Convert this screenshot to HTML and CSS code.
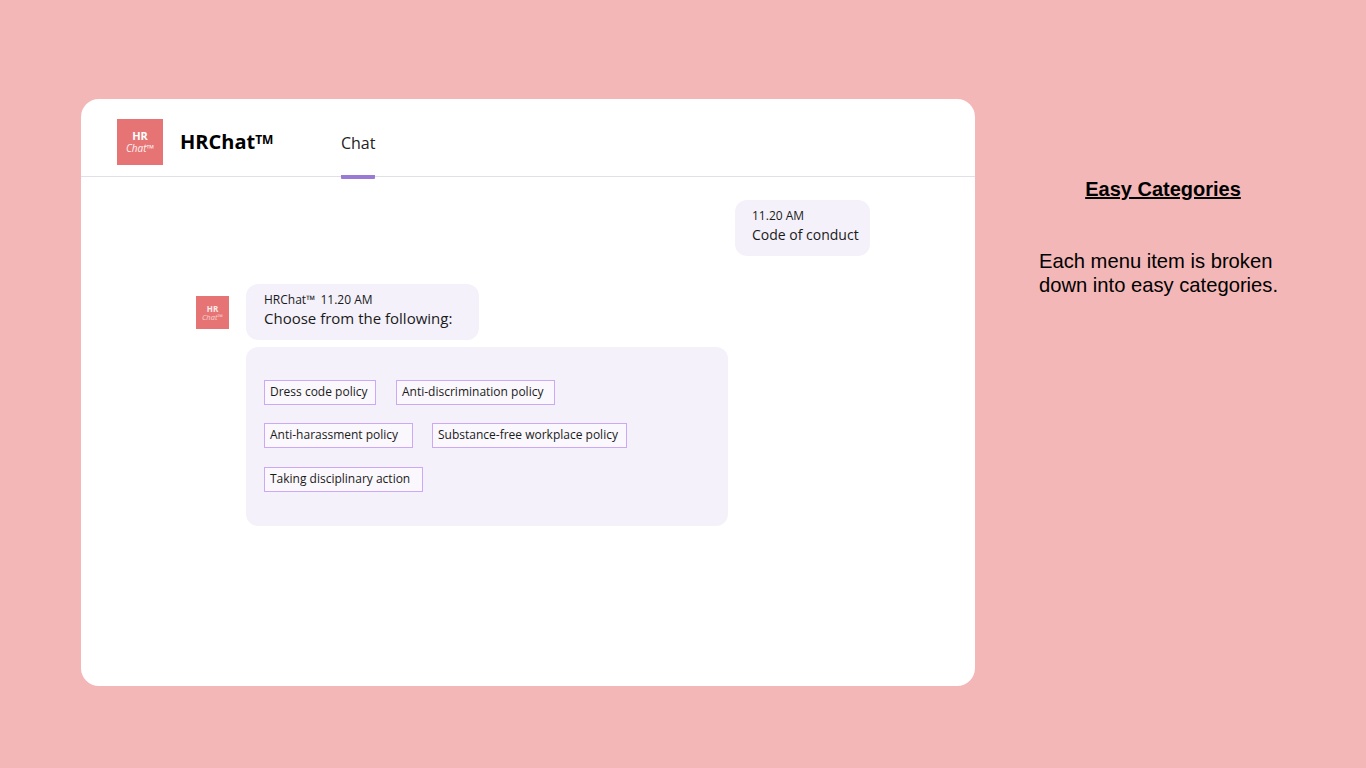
FILE: index.html
```html
<!DOCTYPE html>
<html lang="en">
<head>
    <meta charset="UTF-8">
    <meta name="viewport" content="width=device-width, initial-scale=1.0">
    <title>HRChat</title>
    <link rel="stylesheet" href="styles.css">
</head>
<body>
    <div class="chat-card">
        <header class="chat-header">
            <div class="logo">
                <span class="logo-hr">HR</span>
                <span class="logo-chat">Chat™</span>
            </div>
            <div class="brand">HRChat<span class="brand-tm">TM</span></div>
            <nav class="tabs">
                <a class="tab">Chat</a>
            </nav>
        </header>
        <div class="messages">
            <div class="bubble user-bubble">
                <div class="msg-meta">11.20 AM</div>
                <div class="msg-text">Code of conduct</div>
            </div>
            <div class="bot-row">
                <div class="logo logo-small">
                    <span class="logo-hr">HR</span>
                    <span class="logo-chat">Chat™</span>
                </div>
                <div class="bot-content">
                    <div class="bubble bot-bubble">
                        <div class="msg-meta">HRChat<span class="meta-tm">™</span> 11.20 AM</div>
                        <div class="msg-text msg-text-large">Choose from the following:</div>
                    </div>
                    <div class="options">
                        <div class="options-row">
                            <button class="option option-1">Dress code policy</button>
                            <button class="option option-2">Anti-discrimination policy</button>
                        </div>
                        <div class="options-row options-row-tight">
                            <button class="option option-3">Anti-harassment policy</button>
                            <button class="option option-4">Substance-free workplace policy</button>
                        </div>
                        <div class="options-row options-row-last">
                            <button class="option option-5">Taking disciplinary action</button>
                        </div>
                    </div>
                </div>
            </div>
        </div>
    </div>
    <aside class="notes">
        <h2 class="notes-title">Easy Categories</h2>
        <p class="notes-text">Each menu item is broken down into easy categories.</p>
    </aside>
</body>
</html>
```

FILE: styles.css
```css
body {
    font-family: "Open Sans", sans-serif;
    display: flex;
    align-items: flex-start;
    height: 768px;
    margin: 0;
    overflow: hidden;
    background-color: #f3b7b7;
    color: #111;
}

.chat-card {
    width: 894px;
    height: 587px;
    margin: 99px 0 0 81px;
    background: white;
    border-radius: 18px;
}

.chat-header {
    display: flex;
    align-items: flex-start;
    height: 77px;
    padding-left: 36px;
    border-bottom: 1px solid #e2e0e4;
}

.logo {
    display: flex;
    flex-direction: column;
    align-items: center;
    justify-content: center;
    flex-shrink: 0;
    width: 46px;
    height: 46px;
    margin-top: 20px;
    background-color: #e77474;
    color: white;
}

.logo-hr {
    font-size: 11px;
    font-weight: 700;
    line-height: 12px;
    margin-top: 1px;
}

.logo-chat {
    font-size: 10px;
    font-style: italic;
    line-height: 13px;
    opacity: 0.9;
}

.logo-small {
    width: 33px;
    height: 33px;
    margin: 12px 17px 0 0;
}

.logo-small .logo-hr {
    font-size: 8px;
    line-height: 9px;
    opacity: 0.85;
}

.logo-small .logo-chat {
    font-size: 7.5px;
    line-height: 9px;
    opacity: 0.65;
}

.brand {
    margin: 28px 0 0 17px;
    font-size: 20px;
    font-weight: 700;
    line-height: 30px;
    color: #000;
}

.brand-tm {
    position: relative;
    top: -5px;
    font-size: 12px;
}

.tabs {
    margin-left: 67.5px;
}

.tab {
    display: block;
    height: 80px;
    padding-top: 33px;
    box-sizing: border-box;
    border-bottom: 4px solid #9b7ad6;
    border-radius: 0 0 1px 1px;
    font-size: 16px;
    line-height: 22px;
    color: #222;
}

.messages {
    padding: 23px 105px 0 115px;
}

.bubble {
    background-color: #f4f1fb;
    border-radius: 12px;
    box-sizing: border-box;
    height: 56px;
}

.user-bubble {
    width: 135px;
    margin-left: auto;
    padding: 7px 0 0 17px;
}

.bot-bubble {
    width: 233px;
    padding: 7px 0 0 18px;
}

.msg-meta {
    font-size: 12px;
    line-height: 17px;
    color: #1a1a1a;
}

.meta-tm {
    letter-spacing: 2px;
}

.msg-text {
    font-size: 14px;
    line-height: 22px;
    color: #1a1a1a;
}

.msg-text-large {
    margin-top: -1px;
    font-size: 15px;
}

.bot-row {
    display: flex;
    align-items: flex-start;
    margin-top: 28px;
}

.bot-content {
    width: 482px;
}

.options {
    display: flex;
    flex-direction: column;
    gap: 18px;
    box-sizing: border-box;
    height: 179px;
    margin-top: 7px;
    padding: 33px 18px 0;
    background-color: #f4f1fb;
    border-radius: 12px;
}

.options-row {
    display: flex;
    gap: 20px;
}

.options-row-tight {
    gap: 19px;
}

.options-row-last {
    margin-top: 1px;
}

.option {
    height: 25px;
    padding: 0 0 2px 5px;
    box-sizing: border-box;
    border: 1px solid #cba9f6;
    background-color: #faf8fd;
    font-family: "Open Sans", sans-serif;
    font-size: 12px;
    text-align: left;
    color: #1a1a1a;
}

.option-1 { width: 112px; }
.option-2 { width: 159px; }
.option-3 { width: 149px; }
.option-4 { width: 195px; }
.option-5 { width: 159px; }

.notes {
    width: 260px;
    margin-left: 64px;
    font-family: "Liberation Sans", Arial, sans-serif;
    color: #000;
}

.notes-title {
    margin: 177px 0 0;
    padding-right: 12px;
    font-size: 20px;
    font-weight: 700;
    line-height: 24px;
    text-align: center;
    text-decoration: underline;
}

.notes-text {
    margin: 48px 0 0;
    font-size: 20.2px;
    line-height: 24px;
}
```
